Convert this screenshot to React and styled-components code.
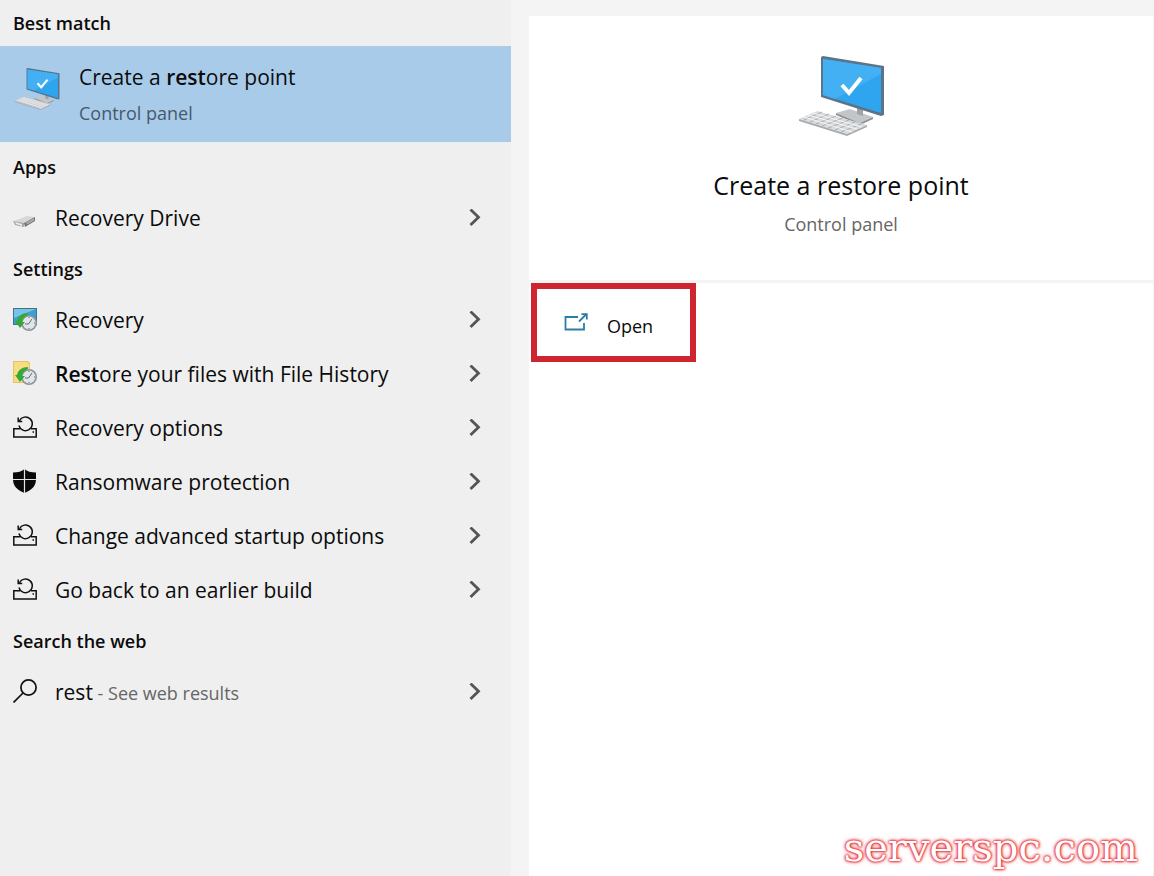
import React, { useState } from 'react';
import styled, { createGlobalStyle, css } from 'styled-components';

const GlobalStyle = createGlobalStyle`
  *, *::before, *::after {
    box-sizing: border-box;
  }

  body {
    margin: 0;
    background: #f3f3f3;
    color: #0b0b0b;
    font-family: 'Open Sans', 'Noto Sans', sans-serif;
  }
`;

const Page = styled.div`
  position: relative;
  display: grid;
  grid-template-columns: 511fr 643fr;
  min-height: 100vh;
`;

const Results = styled.nav`
  background: #efefef;
`;

const SectionTitle = styled.h2`
  margin: 0;
  padding: 0 13px;
  font-size: 18px;
  font-weight: 600;
  line-height: ${({ $first }) => ($first ? '46px' : '48px')};
`;

const List = styled.ul`
  margin: 0;
  padding: 0;
  list-style: none;
`;

const rowReset = css`
  display: flex;
  align-items: center;
  width: 100%;
  border: 0;
  font: inherit;
  color: inherit;
  text-align: left;
  cursor: pointer;
`;

const BestMatch = styled.button`
  ${rowReset}
  gap: 18px;
  height: 96px;
  margin-bottom: 1px;
  padding: 2px 13px 0;
  background: #a9cbea;
`;

const BestMatchIcon = styled.span`
  display: flex;
  padding-bottom: 12px;
`;

const BestMatchText = styled.span`
  display: flex;
  flex-direction: column;
  font-size: 21px;
  line-height: 36px;
`;

const Muted = styled.span`
  color: ${({ $onBlue }) => ($onBlue ? '#46596b' : '#666666')};
  font-size: 18px;
`;

const Row = styled.button`
  ${rowReset}
  gap: 18px;
  height: 54px;
  padding: 0 30px 0 13px;
  background: transparent;
  font-size: 21px;

  &:hover {
    background: #e2e2e2;
  }
`;

const RowIcon = styled.span`
  display: flex;
  padding-bottom: 2px;
`;

const RowLabel = styled.span`
  flex: 1;
  min-width: 0;
`;

const Match = styled.strong`
  font-weight: 600;
`;

const Details = styled.main`
  display: flex;
  flex-direction: column;
  padding: 16px 1px 0 18px;
  background: #f4f4f4;
`;

const Summary = styled.section`
  display: flex;
  flex-direction: column;
  align-items: center;
  height: 264px;
  padding-top: 38px;
  background: #ffffff;
`;

const SummaryTitle = styled.h1`
  margin: 27px 0 0;
  font-size: 25px;
  font-weight: 400;
  line-height: 40px;
`;

const SummaryKind = styled.p`
  margin: 0;
  color: #666666;
  font-size: 18px;
  line-height: 38px;
`;

const Actions = styled.section`
  flex: 1;
  margin-top: 3px;
  padding-left: 2px;
  background: #ffffff;
`;

const OpenButton = styled.button`
  display: flex;
  align-items: center;
  gap: 19px;
  height: 79px;
  padding: 6px 37px 0 27px;
  border: 6px solid #cf2530;
  background: #ffffff;
  color: inherit;
  font: inherit;
  font-size: 18px;
  cursor: pointer;
`;

const OpenGlyph = styled.span`
  display: flex;
  padding-bottom: 8px;
`;

const Watermark = styled.span`
  position: absolute;
  right: 16px;
  bottom: 5px;
  color: #ffffff;
  font-family: 'DejaVu Serif', serif;
  font-size: 40px;
  line-height: 48px;
  text-shadow: 0 0 2px #e8323c, 0 0 2px #e8323c, 0 0 3px #e8323c, 0 0 4px #e8323c;
`;

const ComputerIcon = ({ width, height }) => (
  <svg width={width} height={height} viewBox="0 0 88 84" aria-hidden="true">
    <path d="M39 59 L53 55 L76 63 L63 69 Z" fill="#c3c6c9" />
    <path d="M39 59 L63 69 L76 63 V65 L63 71 L39 61 Z" fill="#8d9195" />
    <path d="M60 52 L66 54 V62 L60 60 Z" fill="#9fa4a8" />
    <path d="M24 3 L26 2 L87 12 V61 L84 62 L24 43 Z" fill="#5b7487" />
    <path d="M26 5 L84 14 V59 L26 41 Z" fill="#2fa5ef" />
    <path d="M26 5 L84 14 V20 L38 45 L26 41 Z" fill="#43b0f4" />
    <path d="M45 31 L52 39 L64 24" fill="none" stroke="#ffffff" strokeWidth="4" />
    <path d="M2 65 L20 57 L70 71 L50 80 Z" fill="#d9dbdd" />
    <path d="M2 65 L50 80 L70 71 V73 L50 82 L2 67 Z" fill="#a8acaf" />
    <path
      d="M7 66 L25 58 M13 68 L32 60 M19 70 L39 62 M25 72 L46 64 M31 74 L52 66 M38 76 L58 68 M44 78 L64 70"
      stroke="#a9adb0"
      strokeWidth="1"
    />
    <path d="M7 63 L55 78 M11 61 L60 75 M16 59 L65 73" stroke="#f7f7f7" strokeWidth="1" />
  </svg>
);

const DriveIcon = () => (
  <svg width="24" height="24" viewBox="0 0 24 24" aria-hidden="true">
    <path d="M1 16 L14 11 L22 12 L13 18 L10 19 Z" fill="#d7d7d7" />
    <path d="M0 16 L11 18 V22 L2 20 Z" fill="#a6a6a6" />
    <path d="M2 17 L9 19 V21 L3 19 Z" fill="#ededed" />
    <path d="M11 18 L22 12 V16 L12 22 Z" fill="#777777" />
    <path d="M13 18 L21 14 M14 19 L21 15" stroke="#b7b7b7" strokeWidth="1" />
  </svg>
);

const HistoryClock = () => (
  <>
    <circle cx="16" cy="16" r="8" fill="#8d9498" />
    <circle cx="16" cy="16" r="6.4" fill="#dfe5e8" />
    <path d="M15.5 17 L19 12 M15.5 17 H12 M16 10 V11 M16 21 V22 M21 16 H22" stroke="#626b70" strokeWidth="1" />
    <path d="M15 6 C9 6 5 9 4 14 H2 L7 21 L12 15 H9 C9.5 11 12 9 15 8 Z" fill="#35a936" />
  </>
);

const RecoveryIcon = () => (
  <svg width="24" height="24" viewBox="0 0 24 24" aria-hidden="true">
    <path d="M0 1 H24 V18 H0 Z" fill="#496f85" />
    <path d="M1 2 H23 V17 H1 Z" fill="#3c9ed2" />
    <path d="M1 2 H23 L1 11 Z" fill="#76c4e9" />
    <HistoryClock />
  </svg>
);

const FileHistoryIcon = () => (
  <svg width="24" height="24" viewBox="0 0 24 24" aria-hidden="true">
    <path d="M0 0 H15 L17 2 V22 H0 Z" fill="#e3c563" />
    <path d="M1 1 H14 L16 3 V21 H1 Z" fill="#f8dd80" />
    <HistoryClock />
  </svg>
);

const ResetIcon = () => (
  <svg width="24" height="24" viewBox="0 0 24 24" fill="none" stroke="#111111" strokeWidth="1.5" aria-hidden="true">
    <path d="M7 13.8 H0.8 V22 H23.2 V13.8 H18" />
    <path d="M6.4 5.8 A6.8 6.8 0 1 1 5.9 10.5" />
    <path d="M5.2 2.4 V6.4 H9.2" />
    <path d="M19.5 17 H21" />
  </svg>
);

const ShieldIcon = () => (
  <svg width="24" height="24" viewBox="0 0 24 24" aria-hidden="true">
    <path d="M11.5 0 C9 2.5 5 3.5 0 3.5 V10 C0 17 4 21 11.5 24 C19 21 23 17 23 10 V3.5 C18 3.5 14 2.5 11.5 0 Z" fill="#0a0a0a" />
    <path d="M11.5 0 V24 M0 10.5 H24" stroke="#e4e4e4" strokeWidth="1.2" />
  </svg>
);

const SearchIcon = () => (
  <svg width="24" height="24" viewBox="0 0 24 24" fill="none" stroke="#111111" strokeWidth="1.7" aria-hidden="true">
    <circle cx="15.5" cy="8.5" r="7.6" />
    <path d="M10 14 L0.5 23.5" />
  </svg>
);

const Chevron = () => (
  <svg width="12" height="18" viewBox="0 0 12 18" fill="none" stroke="#555555" strokeWidth="2.8" aria-hidden="true">
    <path d="M1.5 0.5 L9.5 8.2 L1.5 16" />
  </svg>
);

const OpenIcon = () => (
  <svg width="24" height="18" viewBox="0 0 24 18" fill="none" stroke="#2b7ea8" strokeWidth="1.8" aria-hidden="true">
    <path d="M14 4 H1.5 V16.5 H20 V10" />
    <path d="M15 8.5 L22.5 1" />
    <path d="M17.5 1.2 H22.8 V6.5" />
  </svg>
);

const apps = [{ icon: DriveIcon, label: 'Recovery Drive' }];

const settings = [
  { icon: RecoveryIcon, label: 'Recovery' },
  { icon: FileHistoryIcon, match: 'Rest', label: 'ore your files with File History' },
  { icon: ResetIcon, label: 'Recovery options' },
  { icon: ShieldIcon, label: 'Ransomware protection' },
  { icon: ResetIcon, label: 'Change advanced startup options' },
  { icon: ResetIcon, label: 'Go back to an earlier build' },
];

const web = [{ icon: SearchIcon, label: 'rest', hint: ' - See web results' }];

function ResultList({ items, onSelect }) {
  return (
    <List>
      {items.map(({ icon: Icon, match, label, hint }) => (
        <li key={label}>
          <Row type="button" onClick={() => onSelect(label)}>
            <RowIcon><Icon /></RowIcon>
            <RowLabel>
              {match && <Match>{match}</Match>}
              {label}
              {hint && <Muted>{hint}</Muted>}
            </RowLabel>
            <Chevron />
          </Row>
        </li>
      ))}
    </List>
  );
}

function App() {
  const [, setSelected] = useState(null);

  return (
    <>
      <GlobalStyle />
      <Page>
        <Results aria-label="Search results">
          <SectionTitle $first>Best match</SectionTitle>
          <BestMatch type="button" onClick={() => setSelected(null)}>
            <BestMatchIcon>
              <ComputerIcon width={48} height={44} />
            </BestMatchIcon>
            <BestMatchText>
              <span>Create a <Match>rest</Match>ore point</span>
              <Muted $onBlue>Control panel</Muted>
            </BestMatchText>
          </BestMatch>

          <SectionTitle>Apps</SectionTitle>
          <ResultList items={apps} onSelect={setSelected} />

          <SectionTitle>Settings</SectionTitle>
          <ResultList items={settings} onSelect={setSelected} />

          <SectionTitle>Search the web</SectionTitle>
          <ResultList items={web} onSelect={setSelected} />
        </Results>

        <Details>
          <Summary>
            <ComputerIcon width={88} height={84} />
            <SummaryTitle>Create a restore point</SummaryTitle>
            <SummaryKind>Control panel</SummaryKind>
          </Summary>
          <Actions>
            <OpenButton type="button">
              <OpenGlyph><OpenIcon /></OpenGlyph>
              Open
            </OpenButton>
          </Actions>
        </Details>

        <Watermark>serverspc.com</Watermark>
      </Page>
    </>
  );
}

export default App;
